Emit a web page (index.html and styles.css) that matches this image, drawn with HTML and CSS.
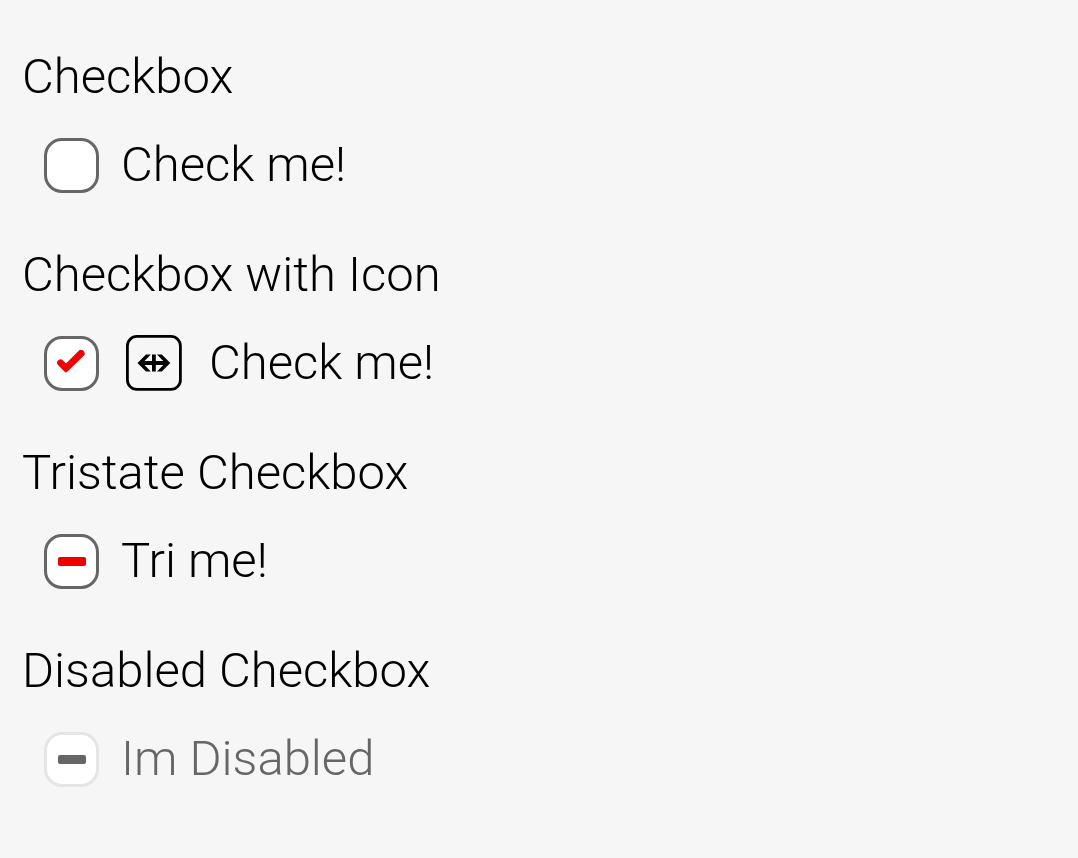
FILE: index.html
```html
<!DOCTYPE html>
<html lang="en">
<head>
<meta charset="utf-8">
<title>Checkbox</title>
<link rel="stylesheet" href="styles.css">
</head>
<body>
<main class="page">
  <section class="group">
    <h2 class="title">Checkbox</h2>
    <label class="row"><input class="box" type="checkbox"><span>Check me!</span></label>
  </section>
  <section class="group">
    <h2 class="title">Checkbox with Icon</h2>
    <label class="row"><input class="box" type="checkbox" checked>
      <svg class="icon" viewBox="0 0 56 56" aria-hidden="true">
        <rect x="1.4" y="1.4" width="53" height="53" rx="9.5" fill="none" stroke="#000" stroke-width="2.8"/>
        <path d="M11.5 28L20 19.5H24.8L18.5 26H26V19.5H29.8V26H37.3L31 19.5H35.8L44.3 28L35.8 36.5H31L37.3 30H29.8V36.5H26V30H18.5L24.8 36.5H20Z"/>
      </svg>
      <span>Check me!</span></label>
  </section>
  <section class="group">
    <h2 class="title">Tristate Checkbox</h2>
    <label class="row"><input class="box mixed" type="checkbox" aria-checked="mixed"><span>Tri me!</span></label>
  </section>
  <section class="group">
    <h2 class="title">Disabled Checkbox</h2>
    <label class="row disabled"><input class="box mixed" type="checkbox" aria-checked="mixed" disabled><span>Im Disabled</span></label>
  </section>
</main>
</body>
</html>
```
FILE: styles.css
```css
body {
  margin: 0;
  background: #f6f6f6;
  color: #000;
  font: 300 49px/66px Roboto, sans-serif;
}
.page {
  display: flex;
  flex-direction: column;
  gap: 44px;
  padding: 44px 22px;
}
.group {
  display: flex;
  flex-direction: column;
  gap: 22px;
}
.title {
  margin: 0;
  font: inherit;
}
.row {
  display: flex;
  align-items: center;
  align-self: flex-start;
  gap: 22px;
  padding-left: 22px;
}
.box {
  appearance: none;
  display: grid;
  place-items: center;
  width: 55px;
  height: 55px;
  margin: 0;
  border: 3px solid #666;
  border-radius: 18px;
  background: #fff;
}
.box:checked::before {
  content: "";
  width: 28px;
  height: 23px;
  margin: 0 1px 4px 0;
  background: #f00000;
  clip-path: path("M8 22.5L1 15.5Q-1 13 1 11L2 10.3Q4 9 6 11L9 14L22 1Q24 -1 26 1L27 2Q28.5 4 27 6L10.5 22Q9.2 23.5 8 22.5Z");
}
.mixed::before {
  content: "";
  width: 28px;
  height: 9px;
  border-radius: 2px;
  background: #f00000;
}
.icon {
  width: 56px;
  height: 56px;
  margin: 0 5px;
}
.disabled {
  color: #666;
}
.disabled .box {
  border-color: #e5e5e5;
}
.disabled .box::before {
  background: #666;
}
```
